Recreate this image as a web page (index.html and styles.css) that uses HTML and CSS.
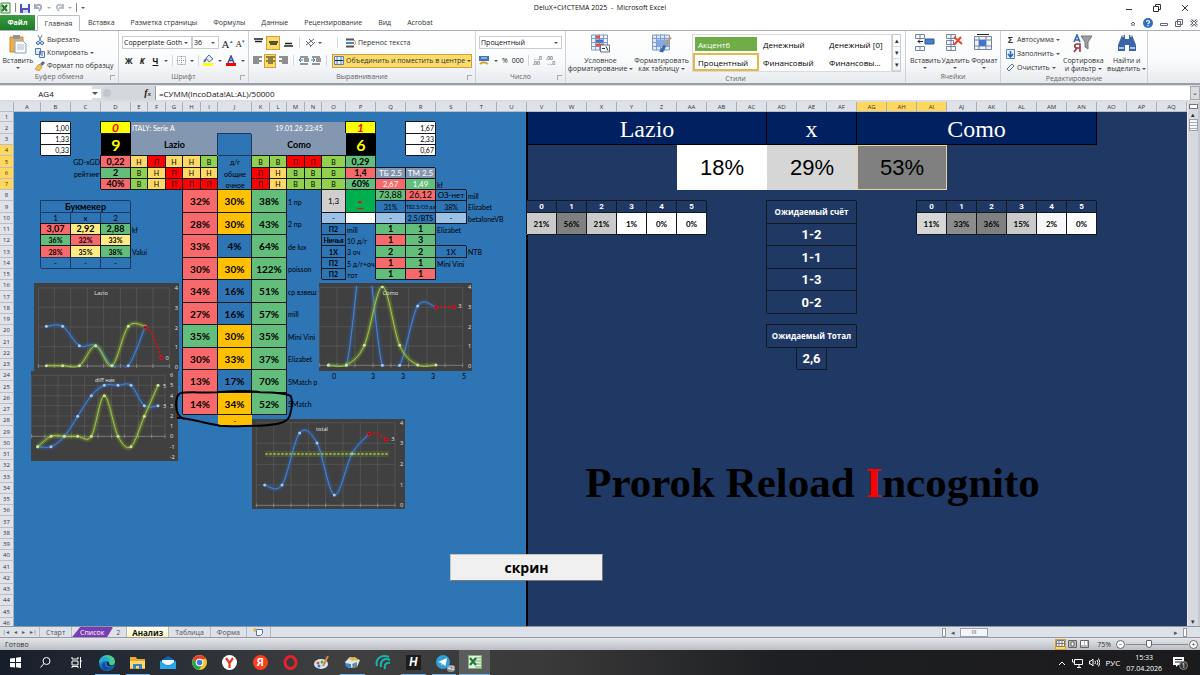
FILE: index.html
```html
<!DOCTYPE html>
<html lang="ru">
<head>
<meta charset="utf-8">
<title>DeluX+СИСТЕМА 2025 - Microsoft Excel</title>
<link rel="stylesheet" href="styles.css">
</head>
<body>
<header class="titlebar">
  <div class="quick">
    <svg width="11" height="12" viewBox="0 0 11 12"><path d="M1 1h9v10H1z" fill="#e9f5e4" stroke="#3d8b3d"/><path d="M2 3l5 6M7 3L2 9" stroke="#1d7a2c" stroke-width="2"/></svg>
    <span class="vline"></span>
    <svg width="10" height="10" viewBox="0 0 10 10"><path d="M0 1h10v9H0z" fill="#4c56b8"/><path d="M2 1h6v4H2z" fill="#f4f6fd"/><path d="M3 7h5v3H3z" fill="#cfd8f2"/></svg>
    <svg width="9" height="9" viewBox="0 0 9 9"><path d="M1 1v4h4M1 4c3-4 7-2 6 1L5 8" fill="none" stroke="#a4adb9" stroke-width="2"/></svg>
    <i class="dd pale"></i>
    <svg width="9" height="9" viewBox="0 0 9 9"><path d="M8 1v4H4M8 4C5 0 1 2 2 5l2 3" fill="none" stroke="#b8bec7" stroke-width="2"/></svg>
    <i class="dd pale"></i>
    <span class="vline"></span>
    <i class="dd"></i>
  </div>
  <h1>DeluX+СИСТЕМА 2025 &nbsp;- &nbsp;Microsoft Excel</h1>
  <div class="winbtns">
    <button aria-label="Свернуть"><svg width="8" height="8"><path d="M1 5.500h6" stroke="#333"/></svg></button>
    <button aria-label="Восстановить"><svg width="8" height="8" fill="none" stroke="#333"><path d="M.5 2.500h5v5h-5zM2.500 2.500v-2h5v5h-2"/></svg></button>
    <button aria-label="Закрыть"><svg width="8" height="8"><path d="M1 1l6 6M7 1L1 7" stroke="#333"/></svg></button>
  </div>
</header>

<nav class="tabs">
  <button class="file">Файл</button>
  <button class="active">Главная</button>
  <button>Вставка</button><button>Разметка страницы</button><button>Формулы</button><button>Данные</button><button>Рецензирование</button><button>Вид</button><button>Acrobat</button>
  <div class="bookbtns">
    <svg width="6" height="6"><path d="M1 4l2-2 2 2M1 5h4" fill="none" stroke="#556"/></svg>
    <svg width="10" height="10"><circle cx="5" cy="5" r="5" fill="#2f6fc4"/><path d="M3.500 4c0-2 3-2 3 0C6.500 5 5 5 5 6.200M5 7v1.200" fill="none" stroke="#fff" stroke-width="1.200"/></svg>
    <svg width="8" height="8"><path d="M.5 4.500h7v2h-7z" fill="#fff" stroke="#667"/></svg>
    <svg width="8" height="8" fill="#fff" stroke="#667"><path d="M2.500.5h5v5h-5zM.5 2.500h5v5h-5z"/></svg>
    <svg width="8" height="8"><path d="M1 1l6 6M7 1L1 7" stroke="#667" stroke-width="2.500"/><path d="M1 1l6 6M7 1L1 7" stroke="#fff"/></svg>
  </div>
</nav>

<section class="ribbon">
  <div class="group g-clip">
    <div class="body">
      <button class="big"><svg width="18" height="20" viewBox="0 0 18 20"><path d="M1 3h13v15H1z" fill="#e9b04d" stroke="#c98a2b"/><path d="M4 1h7v4H4z" fill="#8b95a6"/><path d="M6 7h8l3 3v9H6z" fill="#fbfcfe" stroke="#8ba0c0"/><path d="M8 11h7M8 13h7M8 15h7" stroke="#a9bcda"/></svg>Вставить<i class="dd"></i></button>
      <div class="list">
        <button><svg width="10" height="10"><path d="M3 0l3 6M7 0L4 6" stroke="#6a7890"/><circle cx="3" cy="8" r="1.500" fill="none" stroke="#2c62ac"/><circle cx="7" cy="8" r="1.500" fill="none" stroke="#2c62ac"/></svg>Вырезать</button>
        <button><svg width="10" height="10" fill="#dfe9f8" stroke="#5579b5"><path d="M.5.5h5v6h-5zM4.500 3.500h5v6h-5z"/><path d="M6 5h2M6 7h2"/></svg>Копировать <i class="dd"></i></button>
        <button><svg width="10" height="10"><path d="M5 3l3-3 2 2-3 3z" fill="#5d6a94"/><path d="M4 3l3 3-3 4-4-2z" fill="#efc251" stroke="#b98b24" stroke-width=".7"/></svg>Формат по образцу</button>
      </div>
    </div>
    <footer>Буфер обмена<i class="launch"></i></footer>
  </div>

  <div class="group g-font">
    <div class="body rows">
      <div class="row">
        <label class="combo w70"><select aria-label="Шрифт"><option>Copperplate Goth</option></select></label><label class="combo w26"><select aria-label="Размер"><option>36</option></select></label>
        <button class="glyph">A<sup>▴</sup></button><button class="glyph sm">A<sup>▾</sup></button>
      </div>
      <div class="row gap8">
        <button class="fmt">Ж</button><button class="fmt it">К</button><button class="fmt un">Ч</button><i class="dd"></i>
        <span class="sep"></span>
        <svg width="9" height="9"><path d="M.5.5h8v8h-8zM4.500 0v9M0 4.500h9" fill="none" stroke="#8b94a3" stroke-dasharray="1 1"/></svg><i class="dd"></i>
        <span class="sep"></span>
        <svg width="11" height="11"><path d="M3 3l3-3 4 4-4 3z" fill="#dfe8f5" stroke="#55709c"/><path d="M1 7l2-3" stroke="#3568b0" stroke-width="2"/><path d="M0 8h10v3H0z" fill="#ff0"/></svg><i class="dd"></i>
        <svg width="11" height="11"><path d="M2 8l3-7 3 7M3 5.500h4" fill="none" stroke="#2e4f94" stroke-width="1.500"/><path d="M0 8h10v3H0z" fill="red"/></svg><i class="dd"></i>
      </div>
    </div>
    <footer>Шрифт<i class="launch"></i></footer>
  </div>

  <div class="group g-align">
    <div class="body rows">
      <div class="row">
        <button class="ic"><svg width="9" height="9"><path d="M0 1h9M1 3.500h7" stroke="#222" stroke-width="1.500"/></svg></button>
        <button class="ic on"><svg width="9" height="9"><path d="M0 4h9M1 6h7" stroke="#222" stroke-width="1.500"/></svg></button>
        <button class="ic"><svg width="9" height="9"><path d="M1 5.500h7M0 8h9" stroke="#222" stroke-width="1.500"/></svg></button>
        <span class="sep"></span>
        <svg width="11" height="10"><path d="M1 3l5 5M4 1l5 5M1 7l8-6M5 9l5-5" stroke="#667" fill="none"/></svg><i class="dd"></i>
        <span class="sep far"></span>
        <button class="wide"><svg width="10" height="10"><path d="M0 1.500h8M0 8.500h8" stroke="#555" stroke-width="2"/><path d="M0 5h8" stroke="#4d80c4" stroke-width="2"/><path d="M8 2l2 3-2 2" fill="none" stroke="#d98a35"/></svg>Перенос текста</button>
      </div>
      <div class="row">
        <button class="ic"><svg width="9" height="9"><path d="M0 1h9M0 3h6M0 5h9M0 7h6" stroke="#222"/></svg></button>
        <button class="ic on"><svg width="9" height="9"><path d="M0 1h9M2 3h5M0 5h9M2 7h5" stroke="#222"/></svg></button>
        <button class="ic"><svg width="9" height="9"><path d="M0 1h9M3 3h6M0 5h9M3 7h6" stroke="#222"/></svg></button>
        <span class="sep"></span>
        <svg width="10" height="9"><path d="M1 1h8M5 3h5M5 5h5M1 8h8" stroke="#333"/><path d="M4 4H0m2-2L0 4l2 2" stroke="#2f6fc4" fill="none"/></svg>
        <svg width="10" height="9"><path d="M1 1h8M5 3h5M5 5h5M1 8h8" stroke="#333"/><path d="M0 4h4M2 2l2 2-2 2" stroke="#2f6fc4" fill="none"/></svg>
        <span class="sep"></span>
        <button class="wide on"><svg width="10" height="9"><path d="M.5.5h9v8h-9zM3 0v9M7 0v9" fill="#e6eefa" stroke="#5b7fba"/><path d="M1 4.500h8" stroke="#222"/></svg>Объединить и поместить в центре<i class="dd split"></i></button>
      </div>
    </div>
    <footer>Выравнивание<i class="launch"></i></footer>
  </div>

  <div class="group g-num">
    <div class="body rows">
      <div class="row"><label class="combo full"><select aria-label="Числовой формат"><option>Процентный</option></select></label></div>
      <div class="row gap6">
        <svg width="11" height="10"><path d="M0 0h10v5H0z" fill="#3f74bb"/><path d="M2 2h6" stroke="#d9e6f8"/><path d="M1 8c2-2 5-2 8 0" stroke="#d9a53b" stroke-width="2" fill="none"/></svg><i class="dd"></i>
        <span class="pct">%</span><span class="pct">000</span><span class="sep"></span>
        <span class="dec"><b>←</b>,0<br>,00</span><span class="dec">,00<br><b>→</b>,0</span>
      </div>
    </div>
    <footer>Число<i class="launch"></i></footer>
  </div>

  <div class="group g-style">
    <div class="body">
      <button class="big w61"><svg width="20" height="19" viewBox="0 0 20 19"><path d="M.5.500h16v15H.5zM.5 4h16M.5 8h16M.5 12h16M4.500 0v16M8.500 0v16M12.500 0v16" fill="#eef3fb" stroke="#7f9ccd"/><path d="M5 1h4v3H5zM5 9h7v3H5z" fill="#e2513f"/><path d="M5 5h7v3H5z" fill="#3e72c2"/><path d="M9.500 10.500h9v7h-9z" fill="#f4f6fa" stroke="#66738a"/><path d="M11 14h3M15 12l2 4" stroke="#333"/></svg>Условное<span>форматирование <i class="dd"></i></span></button>
      <button class="big w61"><svg width="20" height="19" viewBox="0 0 20 19"><path d="M.5.500h17v15H.5zM.5 4h17M.5 8h17M.5 12h17M4.500 0v16M8.500 0v16M12.500 0v16" fill="#dfe9f8" stroke="#7f9ccd"/><path d="M5 5h12v7H5z" fill="#83a9e2"/><path d="M19 3l-7 9" stroke="#c79a5b" stroke-width="2"/><path d="M12 10l2 2-3 6-4-1z" fill="#3c69ac"/></svg>Форматировать<span>как таблицу <i class="dd"></i></span></button>
      <div class="gallery">
        <button class="accent">Акцент6</button><button>Денежный</button><button>Денежный [0]</button>
        <button class="cur">Процентный</button><button>Финансовый</button><button>Финансовы...</button>
      </div>
      <div class="updown"><button aria-label="Вверх">▴</button><button aria-label="Вниз">▾</button><button aria-label="Ещё">▾</button></div>
    </div>
    <footer>Стили</footer>
  </div>

  <div class="group g-cells">
    <div class="body">
      <button class="big"><svg width="20" height="18"><path d="M.5.5h9v4h-9zM.5 12.500h9v4h-9zM5 0v5M5 12v5" fill="#f5f7fb" stroke="#76839c"/><path d="M10 5h9v5h-9z" fill="#4a7fcf" stroke="#31599b"/><path d="M8 7.500H3m2-2l-2 2 2 2" stroke="#222" fill="none"/></svg>Вставить<i class="dd"></i></button>
      <button class="big"><svg width="18" height="18"><path d="M.5.5h9v4h-9zM.5 12.500h9v4h-9zM.5 6.500h7v4h-7zM5 0v17" fill="#f5f7fb" stroke="#76839c"/><path d="M8 3l8 7M15 3l-7 8" stroke="#e0452f" stroke-width="2"/></svg>Удалить<i class="dd"></i></button>
      <button class="big"><svg width="20" height="18"><path d="M.5 2.500h17v13H.5zM.5 6h17M.5 12h17M5 2v14M12 2v14" fill="#eef3fb" stroke="#76839c"/><path d="M5 6h7v6H5z" fill="#3f78cf"/><path d="M3 .5h12" stroke="#222"/></svg>Формат<i class="dd"></i></button>
    </div>
    <footer>Ячейки</footer>
  </div>

  <div class="group g-edit">
    <div class="body">
      <div class="list">
        <button><b class="sigma">Σ</b>Автосумма <i class="dd"></i></button>
        <button><svg width="9" height="10"><path d="M.5.5h8v9h-8z" fill="#e8f0fb" stroke="#5b86c4"/><path d="M4.500 2v5M2 5l2.500 3L7 5" fill="none" stroke="#2565c7" stroke-width="1.500"/></svg>Заполнить <i class="dd"></i></button>
        <button><svg width="9" height="9"><path d="M1 6l5-5 2 2-5 5z" fill="#f3f6fb" stroke="#55709c"/></svg>Очистить <i class="dd"></i></button>
      </div>
      <button class="big"><svg width="20" height="19"><path d="M1 8l3-7 3 7M2 6h4" fill="none" stroke="#2d68b8" stroke-width="1.600"/><path d="M7 18v-8H4c-3 0-3 4 0 4h3M4 14l-3 4" fill="none" stroke="#a2323f" stroke-width="1.600"/><path d="M8 2h11l-4 6v7l-3-2V8z" fill="#9aa0a8" stroke="#777"/></svg>Сортировка<span>и фильтр <i class="dd"></i></span></button>
      <button class="big"><svg width="18" height="18"><path d="M4 1h3v4h4V1h3l4 10v6h-7v-6H7v6H0v-6z" fill="#3c64a6"/><path d="M4 2h2M12 2h2M1 14h5M12 14h5" stroke="#a8c2ea" stroke-width="2"/></svg>Найти и<span>выделить <i class="dd"></i></span></button>
    </div>
    <footer>Редактирование</footer>
  </div>
</section>

<div class="formulabar">
  <input class="namebox" value="AG4" aria-label="Имя"><i class="dd"></i>
  <span class="fx"><span class="knob"></span><i>f<small>x</small></i></span>
  <input class="formula" value="=СУММ(IncoData!AL:AL)/50000" aria-label="Строка формул">
  <button class="expand" aria-label="Развернуть">⌄</button>
</div>

<main class="sheetwrap">
  <div class="sheet">
    <table class="grid" id="grid"></table>
    <svg class="chart lazio" id="lazio" viewBox="102 39 435 264"></svg>
    <svg class="chart diff" id="diff" viewBox="93 303 441 270"></svg>
    <svg class="chart como" id="como" viewBox="238 39 459 264"></svg>
    <svg class="chart total" id="total" viewBox="37 447 459 270"></svg>
    <svg class="ink" viewBox="525 360 360 114"><path d="M533 443C570 444 600 458 660 467C700 471 740 466 780 467C830 464 860 460 868 440C876 415 878 390 872 378C850 368 810 367 780 367C750 362 700 362 650 367C600 369 560 364 540 370C525 380 526 415 534 432Q540 442 550 446" fill="none" stroke="#000" stroke-width="6" stroke-linecap="round"/></svg>
    <button class="screen">скрин</button>
  </div>
  <div class="vscroll"><span class="splitbox"></span><button aria-label="Вверх">▴</button><span class="thumb"></span><button class="down" aria-label="Вниз">▾</button></div>
</main>

<div class="sheetbar">
  <div class="navs"><button aria-label="Первый лист">|◂</button><button aria-label="Назад">◂</button><button aria-label="Вперёд">▸</button><button aria-label="Последний лист">▸|</button></div>
  <div class="sheets"><button>Старт</button><button class="purple">Список</button><button class="two">2</button><button class="current">Анализ</button><button>Таблица</button><button>Форма</button>
    <button aria-label="Новый лист"><svg width="11" height="8"><path d="M3.500 1.500h6v4l-2 2h-4z" fill="#fff" stroke="#5574ae"/><path d="M2 0v4M0 2h4" stroke="#e69a2c"/></svg></button></div>
  <div class="hscroll"><span class="splitv"></span><button aria-label="Влево">◂</button><span class="hthumb">III</span><button class="right" aria-label="Вправо">▸</button><span class="splitv"></span></div>
</div>

<footer class="status">
  <span>Готово</span>
  <div class="zoom">
    <button class="view on" aria-label="Обычный"><svg width="9" height="8"><path d="M.5.500h8v6h-8zM.5 3.500h8M3 .5v6M6 .5v6" fill="#fff" stroke="#777"/></svg></button>
    <button class="view" aria-label="Разметка страницы"><svg width="9" height="8"><path d="M.5.500h8v7h-8z" fill="#bbb" stroke="#666"/><path d="M3 2h3v4H3z" fill="#fff" stroke="#666"/></svg></button>
    <button class="view" aria-label="Страничный"><svg width="9" height="8"><path d="M.5.500h8v7h-8z" fill="#bbb" stroke="#666"/><path d="M1 1h3v4H1zM5 1h2v4H5z" fill="#fff"/></svg></button>
    <span class="val">75%</span><button class="round">−</button><input type="range" min="10" max="190" value="75" aria-label="Масштаб"><button class="round">+</button>
  </div>
</footer>

<div class="taskbar">
  <div class="apps">
    <button aria-label="Пуск"><svg width="11" height="11"><path d="M0 1.500L5 1v4H0zM6 .8L11 0v5H6zM0 6h5v4.500L0 10zM6 6h5v5l-5-.7z" fill="#fff"/></svg></button>
    <button aria-label="Поиск"><svg width="11" height="11" fill="none" stroke="#fff"><circle cx="6.500" cy="4" r="3.500"/><path d="M4 6.500L.5 10.500"/></svg></button>
    <button aria-label="Представление задач"><svg width="11" height="11" fill="none" stroke="#fff"><path d="M1 0v2h6V0M1 4h6v4H1zM1 11V9.500h6V11M9.500 0v11M9 4h2"/></svg></button>
    <button class="run" aria-label="Edge"><svg width="16" height="16" viewBox="0 0 16 16"><circle cx="8" cy="8" r="8" fill="#1477ce"/><path d="M0 8C1-2 16-2 16 7c0 4-5 4-6 2 1-4-5-5-10-1z" fill="#45cf8a"/><path d="M1 5c3-5 10-4 10 2-3-3-9-1-9 3z" fill="#25a9d8"/><path d="M6 8c-1 4 4 6 8 4-3 5-12 4-11-2 1-2 2-3 3-2z" fill="#154b96"/><path d="M8 7c-1 4 2 5 6 4l2-2V8c-1 3-5 3-6 1 1-1-1-3-2-2z" fill="#10223c"/></svg></button>
    <button class="run" aria-label="Проводник"><svg width="15" height="12"><path d="M0 0h6l1 2h8v10H0z" fill="#e8a92f"/><path d="M0 4h15v7H0z" fill="#ffd865"/><path d="M3 7h9v5H9V9H6v3H3z" fill="#3b82c8"/></svg></button>
    <button aria-label="Почта"><svg width="16" height="13"><path d="M0 5l8-5 8 5v8H0z" fill="#1066b5"/><path d="M2 4h12v5H2z" fill="#f4f8fc"/><path d="M0 5l8 5 8-5v8H0z" fill="#2ba6ea"/></svg></button>
    <button aria-label="Chrome"><svg width="15" height="15"><circle cx="7.500" cy="7.500" r="7.500" fill="#f6c52c"/><path d="M1 4a7.500 7.500 0 0113 0H7.500L5 9z" fill="#e5402f"/><path d="M1 4a7.500 7.500 0 006 11l3-5-5-1z" fill="#2ba24c"/><circle cx="7.500" cy="7.500" r="3.800" fill="#fff"/><circle cx="7.500" cy="7.500" r="2.800" fill="#3b79e6"/></svg></button>
    <button aria-label="Яндекс Браузер"><svg width="15" height="15"><circle cx="7.500" cy="7.500" r="7.500" fill="#fff"/><path d="M4 3l3.500 5v5M11 3L7.500 8" stroke="#f03525" stroke-width="2.200" fill="none"/></svg></button>
    <button aria-label="Яндекс"><span class="ya">Я</span></button>
    <button aria-label="Opera"><svg width="15" height="15"><ellipse cx="7.500" cy="7.500" rx="5.500" ry="6" fill="none" stroke="#e8222c" stroke-width="3"/></svg></button>
    <button aria-label="Paint"><svg width="15" height="14"><ellipse cx="7" cy="8" rx="7" ry="5" fill="#d6e4f0"/><circle cx="4" cy="7" r="1.500" fill="#e34a3a"/><circle cx="8" cy="6" r="1.500" fill="#58a846"/><circle cx="5" cy="10" r="1.500" fill="#3c78cf"/><path d="M14 0L9 10" stroke="#d5863c" stroke-width="2"/></svg></button>
    <button class="run" aria-label="Почтовый клиент"><svg width="15" height="13"><path d="M0 6l5-5 10 3-3 7-8 1z" fill="#dfe7ee"/><path d="M0 7l6 1v4l-5-1z" fill="#3e86cc"/><path d="M3 2l7-1 4 3-7 1z" fill="#e3bd45"/><path d="M7 8l5-2v5l-4 1z" fill="#6e889b"/></svg></button>
    <button aria-label="Сеть"><svg width="16" height="15" fill="none" stroke="#16b5ae" stroke-width="2"><path d="M14 2C6-1 0 4 2 11M15 5C9 2 5 6 6 12M15 8c-4-1-6 2-5 6"/></svg></button>
    <button class="run" aria-label="H"><span class="hh">H</span></button>
    <button class="run" aria-label="Telegram"><svg width="16" height="15"><circle cx="7" cy="7" r="7" fill="#2f9fdb"/><path d="M2 7l9-4-1.500 8-3-2-1 1.500V8z" fill="#fff"/></svg><span class="badge">42</span></button>
    <button class="run sel" aria-label="Excel"><svg width="14" height="15"><path d="M.5.5h13v13H.5z" fill="#e7f2e2" stroke="#7db36f"/><path d="M7 3h6M7 6h6M7 9h6M7 12h6" stroke="#6faf68"/><path d="M2 3l6 7M8 3l-6 7" stroke="#1c7a36" stroke-width="2.200"/></svg></button>
  </div>
  <div class="tray">
    <svg width="8" height="6"><path d="M1 5l3-3 3 3" fill="none" stroke="#fff"/></svg>
    <svg width="11" height="10" fill="none" stroke="#fff"><path d="M2.500 1.500h8v5h-8zM5 9.500h4M7 6.500v3M.5 1v3h2"/></svg>
    <svg width="11" height="9" fill="none" stroke="#fff"><path d="M.5 3v3h1.500l2 2V1L2 3zM6 3q1 1.500 0 3M8 2q2 2.500 0 5M9.500 .5q3 4 0 8"/></svg>
    <span class="lang">РУС</span>
    <time><span>15:33</span><span>07.04.2026</span></time>
    <span class="note"><svg width="12" height="12"><path d="M0 0h11v8H5L3 10V8H0z" fill="#fff"/><path d="M2 2.500h7M2 5h7" stroke="#222"/></svg><b>1</b></span>
  </div>
</div>
<script src="sheet.js"></script>
</body>
</html>
```
FILE: styles.css
```css
* { box-sizing: border-box; }
body { margin: 0; height: 100vh; min-height: 400px; display: flex; flex-direction: column; overflow: hidden; font: 7px/9px "Open Sans", "Noto Sans", sans-serif; color: #333; background: #fff; }
button, input, select { font: inherit; color: inherit; margin: 0; padding: 0; border: 0; background: none; border-radius: 0; outline: 0; }
button { white-space: nowrap; }
svg { display: block; flex: none; }
.dd { display: inline-block; flex: none; border: 2px solid transparent; border-top-color: #555; border-bottom: 0; vertical-align: middle; }
.dd.pale { border-top-color: #aaa; }
.vline { width: 1px; height: 9px; background: #888; }

.titlebar { flex: none; height: 15px; display: grid; grid-template-columns: 1fr auto 1fr; align-items: center; }
.quick { display: flex; align-items: center; gap: 4px; }
.titlebar h1 { margin: 0; font-size: 7px; line-height: 14px; font-weight: 400; color: #111; }
.winbtns { display: flex; justify-content: flex-end; gap: 20px; padding-right: 11px; }

.tabs { flex: none; height: 16px; display: flex; border-bottom: 1px solid #a9b0ba; }
.tabs button { padding: 0 8px; color: #333; line-height: 15px; }
.tabs .file { width: 35px; background: linear-gradient(#3c9a3f, #1d7a2a); color: #fff; font-weight: 700; padding: 0; }
.tabs .active { margin: 0 0 0 2px; width: 43px; padding: 0; border: 1px solid #b9bfc8; border-bottom: 0; border-radius: 2px 2px 0 0; height: 16px; background: #fff; }
.bookbtns { margin-left: auto; display: flex; align-items: center; gap: 7px; padding-right: 2px; }

.ribbon { flex: none; height: 54px; display: flex; background: linear-gradient(#fff, #fafbfc 55%, #e7eaee); border-bottom: 2px solid #9a9ea5; }
.group { flex: none; display: flex; flex-direction: column; border-right: 1px solid #cfd3d9; }
.g-clip { width: 119px; } .g-font { width: 130px; } .g-align { width: 227px; } .g-num { width: 90px; }
.g-style { width: 340px; } .g-cells { width: 95px; } .g-edit { width: 147px; }
.group footer { display: flex; justify-content: center; position: relative; color: #666; line-height: 12px; height: 12px; }
.launch { position: absolute; right: 3px; top: 4px; width: 5px; height: 5px; border: 1px solid #aaa; border-right: 0; border-bottom: 0; }
.body { flex: 1; display: flex; padding: 3px 1px 0; }
.big { display: flex; flex-direction: column; align-items: center; flex: none; min-width: 29px; line-height: 8px; }
.big svg { height: 20px; margin-bottom: 3px; }
.big .dd { margin-top: 2px; }
.big span .dd { margin-top: 0; }
.w61 { width: 61px; }
.g-clip .big { width: 34px; }
.list { display: flex; flex-direction: column; justify-content: space-between; align-items: flex-start; }
.list button { display: flex; align-items: center; gap: 2px; height: 11px; }
.sigma { width: 9px; font-size: 9px; }
.rows { flex-direction: column; gap: 3px; padding: 4px 3px 0; }
.row { display: flex; align-items: center; gap: 3px; height: 15px; }
.gap8 { gap: 4px; padding-left: 2px; } .gap6 { gap: 4px; }
.gap6 .sep, .gap8 .sep { margin: 0; }
.combo { position: relative; display: block; height: 13px; border: 1px solid #c9ccd1; background: #fff; }
.combo + .combo { margin-left: -3px; }
.combo select { appearance: none; width: 100%; height: 11px; padding-left: 1px; color: #111; display: block; }
.combo::after { content: ""; position: absolute; right: 3px; top: 5px; border: 2px solid transparent; border-top-color: #555; border-bottom: 0; }
.w70 { width: 71px; } .w26 { width: 27px; } .full { width: 84px; }
.glyph { font: 11px/12px "Liberation Serif", serif; color: #222; }
.glyph sup { font-size: 5px; color: #3568b0; }
.glyph.sm { font-size: 9px; }
.fmt { width: 10px; font-weight: 700; font-size: 8px; color: #111; }
.it { font-style: italic; } .un { text-decoration: underline; }
.sep { width: 1px; height: 11px; background: #d5d8dd; margin: 0 3px; }
.sep.far { margin: 0 4px 0 13px; }
.ic { width: 12px; height: 14px; display: flex; align-items: center; justify-content: center; }
.on { background: #fbdc6b; box-shadow: inset 0 0 0 1px #d2a13a; }
.ic.on { width: 14px; }
.g-align .row { gap: 2px; }
.wide { display: flex; align-items: center; gap: 2px; height: 14px; padding: 0 2px; }
.wide.on { width: 140px; }
.split { margin-left: auto; }
.pct { font-size: 7px; color: #222; }
.dec { font-size: 5px; line-height: 5px; color: #222; }
.dec b { color: #2f6fc4; }
.gallery { flex: none; display: grid; grid-template-columns: repeat(3, 66px); grid-template-rows: 18px 18px; font-size: 8px; border: 1px solid #d8dbe0; background: #fff; color: #000; height: 38px; }
.gallery button { text-align: left; padding-left: 4px; }
.gallery .accent { background: #70ad47; color: #fff; margin: 2px; padding-left: 3px; width: 62px; }
.gallery .cur { border: 2px solid #e6b84a; padding-left: 3px; }
.updown { width: 9px; height: 38px; display: grid; grid-template-rows: repeat(3, 1fr); border: 1px solid #c9ccd1; line-height: 8px; }
.updown button { border-bottom: 1px solid #ddd; }
.g-style .body { padding-left: 4px; }
.g-cells .body { padding-left: 4px; }
.g-edit .body { padding-left: 5px; gap: 3px; }
.g-edit .big { min-width: 40px; }

.formulabar { flex: none; height: 17px; padding: 1px 0 2px; display: flex; align-items: center; background: #d9dce1; }
.formulabar input { height: 14px; background: #fff; color: #111; font-size: 8px; }
.namebox { width: 92px; text-align: center; }
.formulabar > .dd { border-width: 3px 3px 0; outline: 3px solid #fff; background: #fff; width: 6px; }
.fx { width: 54px; margin-left: 3px; height: 14px; display: flex; align-items: center; justify-content: space-between; padding-right: 4px; background: #d4d7dc; border-radius: 7px 0 0 7px; font: italic bold 10px/12px "Liberation Serif", serif; color: #222; }
.fx small { font-size: 7px; }
.knob { width: 8px; height: 8px; border-radius: 4px; background: #c2c6cc; margin-left: 2px; }
.formula { flex: 1; padding-left: 3px; border-left: 1px solid #999; }
.expand { width: 10px; height: 14px; border: 1px solid #aaa; line-height: 8px; }

.sheetwrap { flex: 1; min-height: 0; display: flex; background: #203864; }
.sheet { flex: 1; min-width: 0; overflow: hidden; position: relative; }
.grid { border-collapse: separate; border-spacing: 0; table-layout: fixed; width: 1187px; font: 8px/10px Lato, "Noto Sans", sans-serif; color: #000; }
.grid tr { height: 11px; }
.grid thead tr { height: 10px; }
.grid tr.r10 { height: 10px; }
.grid tr.r12 { height: 12px; }
.grid td, .grid th { padding: 0; white-space: nowrap; text-align: center; vertical-align: middle; }
.grid th { background: #dfe2e8; border-right: 1px solid #a9b0bb; border-bottom: 1px solid #b9bfc8; font: 6px/8px "Open Sans", sans-serif; color: #333; }
.grid th.hot { background: #ffd75c; }
.c-head { width: 14px; }
.c-left { background: #2e75b6; }
.c-navy { background: #203864; }
.grid td.edge { border-left: 1px solid #000; box-shadow: -1px 0 0 #000; }
.grid .b { border-right: 1px solid #101820; border-bottom: 1px solid #101820; box-shadow: -1px -1px 0 #101820; }
.grid .soft { border-right: 1px solid #1b3a63; border-bottom: 1px solid #1b3a63; box-shadow: -1px -1px 0 #1b3a63; }
.grid .l { text-align: left; padding-left: 1px; font-size: 7px; }
.grid .r { text-align: right; padding-right: 1px; font-size: 7px; }
.grid .w { background: #fff; }
.grid .red { background: #f8696b; }
.grid .green { background: #63be7b; }
.grid .or { background: #ffc000; }
.grid .ye { background: #ffeb84; }
.grid .blue { background: #2e75b6; }
.grid .slate { background: #8497b0; }
.grid .sky { background: #9bc2e6; }
.grid .win { background: #92d050; font-size: 7px; }
.grid .draw { background: #ffd966; font-size: 7px; }
.grid .loss { background: #f00; font-size: 7px; color: #200; }
.grid .emerald { background: #00b050; color: #f00; font-size: 16px; font-weight: 700; text-decoration: underline; }
.grid .lg1 { background: #d0cece; }
.grid .wt { color: #fff; }
.grid .bold { font-weight: 700; }
.grid .pc { font-weight: 700; font-size: 10px; }
.grid .m { font-weight: 700; font-size: 9px; }
.grid .n9 { font-size: 9px; }
.grid .s { font-size: 7px; font-weight: 700; }
.grid .s7 { font-size: 7px; }
.grid .tiny { font-size: 5px; }
.grid .score0 { background: #ff0; color: #f00; font: italic 700 12px/10px Lato, sans-serif; }
.grid .score { background: #000; color: #ff0; font: 700 16px/18px Lato, sans-serif; }
.grid .team { background: #002060; color: #fff; font: 24px/26px "Liberation Serif", serif; border-right: 1px solid #000; border-bottom: 1px solid #000; padding-top: 2px; }
.grid .prob { font: 22px/26px "Liberation Sans", sans-serif; }
.grid .g1 { background: #d6d6d6; } .grid .g2 { background: #808080; } .grid .g3 { background: #8c8c8c; }
.grid .g4 { background: #cacaca; } .grid .g5 { background: #f8f8f8; }
.grid .sel { border: 1px solid #ecd0a2; }
.grid .num { color: #fff; font: 700 8px/10px Roboto, sans-serif; }
.grid .res { color: #fff; font: 700 13px/15px Roboto, sans-serif; }
.grid .cap { color: #fff; font: 700 8px/10px "Open Sans", sans-serif; }
.grid .brand { font: 700 43px/42px "Liberation Serif", serif; }
.brand b { color: #f00; }

.chart, .ink, .screen { position: absolute; }
.chart { background: #404040; }
.lazio { left: 34px; top: 181px; width: 145px; height: 88px; }
.diff { left: 31px; top: 269px; width: 147px; height: 90px; }
.como { left: 319px; top: 181px; width: 153px; height: 88px; }
.total { left: 252px; top: 317px; width: 153px; height: 90px; }
.ink { left: 175px; top: 288px; width: 120px; height: 38px; }
.gl { stroke: #5c5c5c; stroke-width: 2; fill: none; }
.ax { stroke: #9a9a9a; stroke-width: 2; fill: none; }
.chart text { font: 17px "Open Sans", sans-serif; fill: #e4e4e4; text-anchor: middle; }
.glow { fill: none; stroke-width: 18; opacity: .2; }
.glow.in { stroke-width: 10; opacity: .3; }
.line { fill: none; stroke-width: 3; }
.sb { stroke: #4f86cf; } .sg { stroke: #a3c653; }
.glow.sb { stroke: #2a62b4; } .glow.sg { stroke: #7fa52a; }
.pb { fill: #a9c8f0; } .pg { fill: #cfe39b; }
.reddots { fill: none; stroke: #e00d0d; stroke-width: 6; stroke-dasharray: 6 6; }
.redpt { fill: #7d1820; stroke: #f01018; stroke-width: 3; }
.greendash { stroke: #a3c653; stroke-width: 5; stroke-dasharray: 7 5; fill: none; }
.screen { left: 450px; top: 452px; width: 153px; height: 27px; background: #f0f0f0; border: 1px solid #c4c4c4; border-right-color: #777; border-bottom-color: #777; font: 700 14px/20px "Open Sans", sans-serif; color: #000; }

.vscroll { flex: none; width: 13px; display: flex; flex-direction: column; align-items: center; background: #d6dae0; border-right: 2px solid #c3c8d0; border-left: 1px solid #eef0f3; }
.vscroll button { line-height: 9px; height: 10px; color: #333; }
.splitbox { width: 9px; height: 5px; margin-top: 2px; background: #fff; border: 1px solid #777; }
.thumb { width: 9px; height: 12px; border: 1px solid #9aa1ad; background: repeating-linear-gradient(#f5f6f8 0 2px, #a8adb6 2px 3px); }
.down { margin-top: auto; }

.sheetbar { flex: none; height: 11px; display: flex; background: #dde1e8; border-top: 1px solid #8f959e; line-height: 9px; color: #555; }
.navs { width: 40px; display: flex; justify-content: space-around; font-size: 6px; border-right: 1px solid #bbb; }
.sheets { display: flex; }
.sheets button { padding: 0 6px; border-right: 1px solid #b3b9c3; height: 10px; line-height: 9px; }
.sheets .purple { background: #7a3cb4; color: #fff; padding: 0; clip-path: polygon(8px 0, 100% 0, calc(100% - 6px) 100%, 0 100%); width: 41px; }
.sheets .two { padding: 0 6px 0 3px; }
.sheets .current { background: linear-gradient(#fff, #fdf7b4); color: #111; font-weight: 700; font-size: 8px; padding: 0 5px; }
.hscroll { margin-left: auto; width: 258px; display: flex; align-items: center; gap: 5px; padding-right: 13px; }
.splitv { width: 4px; height: 9px; background: #fff; border: 1px solid #999; }
.hthumb { width: 28px; height: 9px; border: 1px solid #9aa1ad; background: #f3f5f8; text-align: center; line-height: 7px; font-size: 6px; }
.right { margin-left: auto; }

.status { flex: none; height: 13px; display: flex; align-items: center; justify-content: space-between; padding: 0 2px 0 5px; border-top: 1px solid #99a; background: linear-gradient(#e3e5e8, #bbbfc5); color: #333; }
.zoom { display: flex; align-items: center; gap: 1px; }
.view { width: 11px; height: 11px; display: flex; align-items: center; justify-content: center; }
.val { margin: 0 4px 0 6px; }
.round { width: 9px; height: 9px; border: 1px solid #666; border-radius: 5px; background: #fff; line-height: 7px; }
.zoom input { appearance: none; width: 62px; height: 9px; background: linear-gradient(#888, #888) center / 100% 1px no-repeat; }
.zoom input::-webkit-slider-thumb { appearance: none; width: 6px; height: 8px; background: #fff; border: 1px solid #666; border-radius: 1px 1px 3px 3px; }

.taskbar { flex: none; height: 25px; display: flex; justify-content: space-between; background: linear-gradient(90deg, #171e2b, #2b3038 15%, #3f3f3f 28%, #3a3a3a 45%, #1e1f22 65%, #1b1b1d); color: #fff; }
.apps { width: 490px; display: flex; }
.apps button { flex: 1; display: flex; align-items: center; justify-content: center; position: relative; color: #fff; }
.run::after { content: ""; position: absolute; left: 3px; right: 3px; bottom: 0; height: 1px; background: #76b9ed; }
.apps .sel { background: #5c5c5c; }
.sel.run::after { left: 0; right: 0; }
.ya { width: 15px; height: 15px; border-radius: 8px; background: #fc3f1d; font: 700 11px/15px Roboto, sans-serif; }
.hh { width: 15px; height: 15px; background: #1d1d1d; font: italic 700 12px/15px Roboto, sans-serif; }
.badge { position: absolute; right: 4px; bottom: 3px; background: #8a8f94; border-radius: 3px; font-size: 6px; line-height: 7px; padding: 0 1px; }
.tray { display: flex; align-items: center; gap: 6px; padding-right: 11px; font-size: 7px; }
.tray time { display: flex; flex-direction: column; align-items: center; line-height: 11px; }
.tray .lang { font-size: 8px; }
.note { position: relative; margin-left: 5px; width: 16px; }
.note b { position: absolute; left: 6px; top: 4px; width: 9px; height: 9px; border-radius: 5px; background: #333; font-size: 7px; text-align: center; font-weight: 400; border: 1px solid #888; line-height: 7px; }
```
FILE: sheet.js
```js
const widths = [27, 30, 30, 30, 17, 18, 17, 18, 17, 34, 18, 17, 18, 17, 24, 30, 30, 30, 31, 30, 30].concat(Array(22).fill(30));
const colName = n => n < 26 ? String.fromCharCode(65 + n) : 'A' + String.fromCharCode(39 + n);
const colIndex = s => s.length === 1 ? s.charCodeAt(0) - 65 : s.charCodeAt(1) - 39;
const ROWS = 46;
const cells = {};

function put(range, text, cls = '') {
  const [a, z = a] = range.split(':');
  const [, c1, r1] = a.match(/([A-Z]+)(\d+)/);
  const [, c2, r2] = z.match(/([A-Z]+)(\d+)/);
  const c = colIndex(c1), r = +r1, cs = colIndex(c2) - c + 1, rs = +r2 - r + 1;
  for (let y = r; y < r + rs; y++) for (let x = c; x < c + cs; x++) cells[y + ',' + x] = 'covered';
  cells[r + ',' + c] = { text, cls, cs, rs };
}
const line = (col, row, items, cls) => items.forEach((t, i) => put(colName(colIndex(col) + i) + row, ...(Array.isArray(t) ? t : [t, cls])));

['1,00', '1,33', '0,33'].forEach((t, i) => put('B' + (i + 2), t, 'w b r'));
['1,67', '2,33', '0,67'].forEach((t, i) => put('R' + (i + 2), t, 'w b r'));
put('D2', '0', 'score0 b'); put('D3:D4', '9', 'score');
put('P2', '1', 'score0 b'); put('P3:P4', '6', 'score');
put('E2:J2', 'ITALY: Serie A', 'slate wt l'); put('K2:O2', '19.01.26 23:45', 'slate wt s7');
put('E3:I4', 'Lazio', 'slate m'); put('K3:O4', 'Como', 'slate m');
put('J3:J4', '', 'soft'); put('J5', 'д/г', 's7'); put('J6', 'общие', 's7'); put('J7', 'очное', 's7');
put('C5', 'GD-xGD', 'r'); put('C6', 'рейтинг', 'r');
const marks = { 'В': 'win b', 'Н': 'draw b', 'П': 'loss b' };
[['E5', 'НПННВ'], ['E6', 'ВНПНН'], ['E7', 'ВНППП'], ['K5', 'ВВППВ'], ['K6', 'ПНВВВ'], ['K7', 'ПНВВВ']]
  .forEach(([ref, s]) => line(ref[0], ref[1], [...s].map(m => [m, marks[m]])));
put('D5', '0,22', 'red b m'); put('D6', '2', 'green b m'); put('D7', '40%', 'red b m');
put('P5', '0,29', 'green b m'); put('P6', '1,4', 'red b m'); put('P7', '60%', 'green b m');
line('Q', 6, ['ТБ 2.5', 'ТМ 2.5'], 'slate wt b');
line('Q', 7, [['2,67', 'red wt b'], ['1,49', 'green wt b'], ['kf', 'l']]);
line('Q', 8, [['73,88', 'green b n9'], ['26,12', 'red b n9'], ['ОЗ-нет', 'b'], ['mill', 'l']]);
line('Q', 9, [['31%', 'b s7'], ['ТБ2.5/ОЗ да', 'b tiny'], ['38%', 'b s7'], ['Elizabet', 'l']]);
line('O', 10, [['-', 'sky b'], ['', 'w b'], ['-', 'sky b'], ['2.5/BTS', 'b s7'], ['-', 'sky b'], ['betaloneVB', 'l']]);
put('O8:O9', '1,3', 'lg1 b'); put('P8:P9', '-', 'emerald b');
[['П2', 'mill', '1', 'green', '1', 'green'], ['Ничья', '10 д/г', '1', 'red', '3', 'green'], ['1X', '3 оч', '2', 'green', '2', 'green'],
 ['П2', '5 д/г+оч', '1', 'red', '1', 'green'], ['П2', 'тот', '1', 'green', '1', 'red']]
  .forEach((v, i) => line('O', 11 + i, [[v[0], 'b s'], [v[1], 'l'], [v[2], v[3] + ' b m'], [v[4], v[5] + ' b m']]));
put('S11', 'Elizabet', 'l'); put('S13', '1X', 'b'); put('T13', 'NTB', 'l'); put('S14', 'Mini Vini', 'l');

put('B9:D9', 'Букмекер', 'soft m');
line('B', 10, ['1', 'x', '2'], 'soft');
line('B', 11, [['3,07', 'red b m'], ['2,92', 'ye b m'], ['2,88', 'green b m'], ['kf', 'l']]);
line('B', 12, [['36%', 'green b s'], ['32%', 'red b s'], ['33%', 'ye b s']]);
line('B', 13, [['28%', 'red b s'], ['35%', 'ye b s'], ['38%', 'green b s'], ['Valui', 'l']]);
line('B', 14, ['-', '-', '-'], 'soft');

[[32, 30, 38, '1 пр'], [28, 30, 43, '2 пр'], [33, 4, 64, 'de lux'], [30, 30, 122, 'poisson'], [34, 16, 51, 'ср взвеш'],
 [27, 16, 57, 'mill'], [35, 30, 35, 'Mini Vini'], [30, 33, 37, 'Elizabet'], [13, 17, 70, '5Match p'], [14, 34, 52, '5Match']]
  .forEach(([h, d, a, name], i) => {
    const r = 8 + i * 2, q = r + 1;
    put(`H${r}:I${q}`, h + '%', (h === 35 ? 'green' : 'red') + ' b pc');
    put(`J${r}:J${q}`, d + '%', (d >= 30 ? 'or' : 'blue') + ' b pc');
    put(`K${r}:L${q}`, a + '%', 'green b pc');
    put(`M${r}:N${q}`, name, 'l');
  });
put('J28', '-', 'or');
put('O24', '0', 's7'); line('P', 24, ['3', '3', '3', '5'], 'r');

put('V1:AC3', 'Lazio', 'team edge'); put('AD1:AF3', 'x', 'team'); put('AG1:AN3', 'Como', 'team');
put('AA4:AC7', '18%', 'prob w'); put('AD4:AF7', '29%', 'prob g1'); put('AG4:AI7', '53%', 'prob g2 sel');
function spread(col, vals) {
  vals.forEach(([t, c], i) => {
    const name = colName(colIndex(col) + i);
    put(name + 9, String(i), 'num b');
    put(`${name}10:${name}11`, t, c + ' b bold');
  });
}
spread('V', [['21%', 'g4'], ['56%', 'g2'], ['21%', 'g4'], ['1%', 'w'], ['0%', 'w'], ['0%', 'w']]);
spread('AI', [['11%', 'g1'], ['33%', 'g3'], ['36%', 'g2'], ['15%', 'g4'], ['2%', 'g5'], ['0%', 'w']]);
put('AD9:AF10', 'Ожидаемый счёт', 'cap b');
['1-2', '1-1', '1-3', '0-2'].forEach((t, i) => put(`AD${11 + i * 2}:AF${12 + i * 2}`, t, 'res b'));
put('AD20:AF21', 'Ожидаемый Тотал', 'cap b'); put('AE22:AE23', '2,6', 'res b');
put('V32:AN35', 'Prorok Reload <b>I</b>ncognito', 'brand edge');

let html = '<colgroup><col class="c-head">' + widths.map((w, i) => `<col class="${i < 21 ? 'c-left' : 'c-navy'}" style="width:${w}px">`).join('') + '</colgroup><thead><tr><th></th>';
widths.forEach((w, i) => { html += `<th scope="col"${i >= 32 && i <= 34 ? ' class="hot"' : ''}>${colName(i)}</th>`; });
html += '</tr></thead><tbody>';
for (let r = 1; r <= ROWS; r++) {
  const size = r === 1 ? 'r10' : r === 2 || (r > 4 && r % 4 === 1) ? 'r12' : '';
  html += `<tr class="${size}"><th scope="row"${r >= 4 && r <= 7 ? ' class="hot"' : ''}>${r}</th>`;
  for (let c = 0; c < widths.length; c++) {
    const v = cells[r + ',' + c];
    if (v === 'covered') continue;
    if (!v) html += c === 21 ? '<td class="edge"></td>' : '<td></td>';
    else html += `<td class="${v.cls}" colspan="${v.cs}" rowspan="${v.rs}">${v.text}</td>`;
  }
  html += '</tr>';
}
document.getElementById('grid').innerHTML = html + '</tbody>';

/* Charts */
function smooth(p) {
  let d = `M${p[0]}`;
  for (let i = 0; i < p.length - 1; i++) {
    const a = p[i - 1] || p[i], b = p[i], c = p[i + 1], e = p[i + 2] || c;
    d += `C${b[0] + (c[0] - a[0]) / 6} ${b[1] + (c[1] - a[1]) / 6} ${c[0] - (e[0] - b[0]) / 6} ${c[1] - (e[1] - b[1]) / 6} ${c}`;
  }
  return d;
}
function chart(id, o) {
  let s = `<clipPath id="c-${id}"><path d="M0 ${o.ys[0] - 5}h900V${o.floor || o.axis + 5}H0z"/></clipPath>`;
  const x0 = o.xs[0], x1 = o.xs[o.xs.length - 1];
  s += `<path class="gl" d="${o.xs.map(x => `M${x} ${o.ys[0]}V${o.axis}`).join('')}${o.ys.map(y => `M${x0} ${y}H${x1}`).join('')}"/>`;
  s += `<path class="ax" d="M${x0} ${o.axis}H${x1}${o.xs.map(x => `M${x} ${o.axis - 6}v12`).join('')}"/>`;
  s += `<g clip-path="url(#c-${id})">`;
  for (const [k, pts] of o.series) {
    const d = smooth(pts);
    s += `<path class="glow s${k}" d="${d}"/><path class="glow in s${k}" d="${d}"/><path class="line s${k}" d="${d}"/>`;
    s += pts.map(([x, y]) => `<circle class="p${k}" cx="${x}" cy="${y}" r="4.500"/>`).join('');
  }
  s += '</g>';
  if (o.dash) s += `<path class="glow sg" d="${o.dash}"/><path class="greendash" d="${o.dash}"/>`;
  if (o.red) {
    s += `<path class="reddots" d="${smooth(o.red)}"/>`;
    s += [o.red[0], o.red[o.red.length - 1]].map(([x, y]) => `<circle class="redpt" cx="${x}" cy="${y}" r="5"/>`).join('');
  }
  s += o.texts.map(([t, x, y]) => `<text x="${x}" y="${y + 6}">${t}</text>`).join('');
  document.getElementById(id).innerHTML = s;
}
chart('lazio', {
  xs: [115, 163, 212, 262, 311, 361, 410, 459, 508], ys: [54, 112, 171, 230], axis: 288,
  series: [['b', [[139, 169], [188, 169], [238, 227], [287, 227], [336, 287], [385, 287], [436, 169]]],
           ['g', [[139, 287], [188, 287], [238, 287], [287, 227], [336, 287], [385, 169], [436, 169]]]],
  red: [[436, 172], [458, 194], [484, 264]],
  texts: [['4', 529, 54], ['3', 529, 113], ['2', 529, 173], ['1', 529, 231], ['0', 529, 291], ['Lazio', 303, 68], ['0', 501, 263]]
});
chart('diff', {
  xs: [95, 135, 174, 214, 254, 294, 335, 374, 415, 455, 495], ys: [316, 346, 377, 407, 438, 468], axis: 499, floor: 570,
  series: [['b', [[113, 530], [153, 530], [193, 499], [233, 439], [274, 377], [313, 346], [354, 346], [393, 346], [433, 407], [474, 407]]],
           ['g', [[113, 530], [153, 499], [193, 499], [233, 499], [274, 499], [313, 377], [354, 499], [393, 530], [433, 439], [474, 346]]]],
  texts: [['6', 515, 315], ['5', 515, 346], ['4', 515, 377], ['3', 515, 407], ['2', 515, 438], ['1', 515, 469], ['0', 515, 499], ['-1', 517, 531], ['-2', 517, 561], ['diff нак', 315, 331], ['5', 494, 347], ['3', 494, 408]]
});
chart('como', {
  xs: [240, 292, 346, 400, 454, 507, 562, 616, 669], ys: [52, 112, 170, 228], axis: 286,
  series: [['b', [[266, 286], [320, 286], [374, -70], [428, 286], [480, 286], [534, 108], [589, 112]]],
           ['g', [[266, 285], [320, 285], [374, 226], [428, 50], [480, 226], [534, 285], [589, 285]]]],
  red: [[589, 112], [616, 109], [643, 112]],
  texts: [['4', 690, 52], ['3', 690, 112], ['2', 690, 171], ['1', 690, 229], ['0', 690, 288], ['Como', 452, 68], ['3', 661, 109]]
});
chart('total', {
  xs: [50, 102, 154, 206, 258, 310, 362, 414, 466], ys: [458, 520, 583, 645], axis: 706,
  series: [['b', [[75, 645], [127, 645], [180, 489], [232, 519], [284, 675], [337, 551], [388, 492]]]],
  dash: 'M77 552H448', red: [[388, 492], [412, 490], [440, 509]],
  texts: [['4', 486, 458], ['3', 486, 520], ['2', 486, 583], ['1', 486, 645], ['0', 486, 706], ['total', 247, 477], ['3', 460, 508]]
});
```
